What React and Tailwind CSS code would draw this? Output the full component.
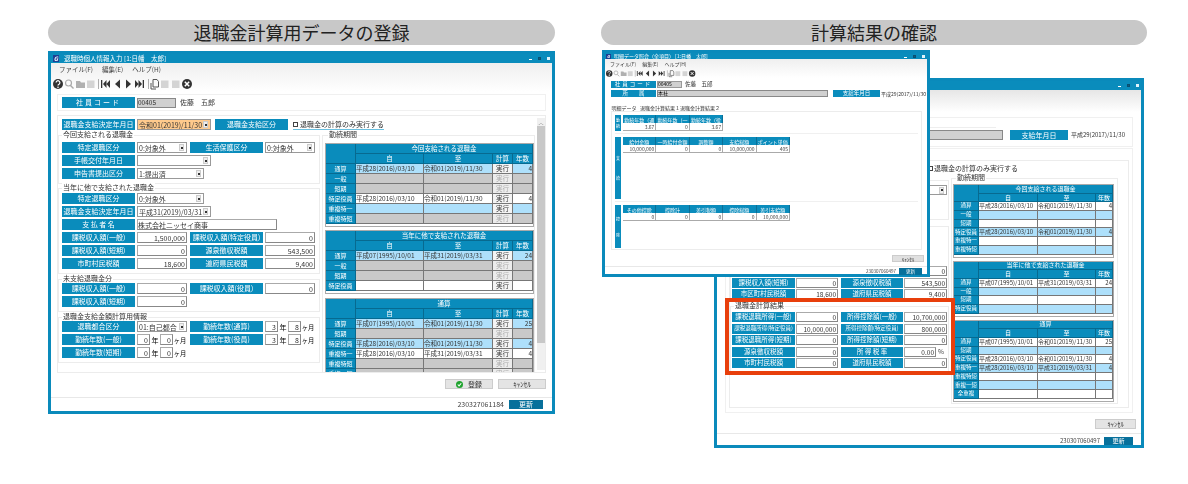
import React from 'react';

const blue = 'bg-[#0a8cbc]';

// generic bits used by all three windows
function Label({ children, className = '' }) {
    return <div className={`${blue} text-white text-center shrink-0 whitespace-nowrap overflow-hidden ${className}`}>{children}</div>;
}

function Field({ children, className = '' }) {
    return <div className={`bg-white border border-[#aaa] border-r-[#888] border-b-[#888] text-right pr-[1px] shrink-0 whitespace-nowrap overflow-hidden text-[#333] ${className}`}>{children}</div>;
}

function Select({ children, className = '' }) {
    return (
        <div className={`border border-[#999] flex items-center justify-between pl-[1px] pr-[2px] shrink-0 text-[#333] whitespace-nowrap ${className || 'bg-white'}`}>
            <span>{children}</span>
            <span className="w-[5px] h-[7px] bg-[#eee] border border-[#ccc] flex items-center justify-center">
                <span className="w-[2px] h-[2px] bg-[#333]" />
            </span>
        </div>
    );
}

function Group({ title, children, className = '' }) {
    return (
        <div className={`border border-[#ececec] ${className}`}>
            <div className="-mt-[6px] ml-[3px] w-fit bg-white px-[1px] h-[9px] leading-[9px] text-[7px] text-[#333]">{title}</div>
            {children}
        </div>
    );
}

function GLogo({ className = '' }) {
    return <span className={`bg-[#1c3f94] text-white font-bold italic flex items-center justify-center shrink-0 ${className}`}>G</span>;
}

function WinControls() {
    return (
        <div className="flex items-center gap-[6px] ml-auto mr-[2px]">
            <span className="w-[3px] h-[1px] mt-[2px] bg-white" />
            <span className="w-[3px] h-[3px] bg-[#0a5f86] border border-[#0b4f70]" />
            <span className="w-[3px] h-[3px] bg-[#dff3fb]" />
        </div>
    );
}

function ToolbarIcons({ width, height }) {
    return (
        <svg viewBox="0 0 150 14" width={width} height={height} className="shrink-0">
            <circle cx="10" cy="7" r="5" fill="#333" />
            <path d="M8.100 5.600a1.900 1.900 0 1 1 2.900 1.600c-.7.4-1 .8-1 1.400" stroke="#fff" strokeWidth="1.200" fill="none" />
            <circle cx="10" cy="10.200" r=".8" fill="#fff" />
            <circle cx="20.500" cy="6" r="3" stroke="#aaa" strokeWidth="1.200" fill="none" />
            <path d="M22.500 8.400l3 3" stroke="#aaa" strokeWidth="1.400" />
            <path d="M28 4h4l1 1.500h4V11h-9z" fill="#b0b0b0" />
            <rect x="39" y="3.500" width="7.500" height="7.500" fill="#d4d4d4" />
            <path d="M50.500 2v10" stroke="#999" strokeWidth=".8" />
            <path d="M53 3v8h1.300V3zM55 7l3.500-4v8zM58.500 7l3.500-4v8z" fill="#333" />
            <path d="M67 7l5-4.500v9z" fill="#333" />
            <path d="M83 7l-5-4.500v9z" fill="#333" />
            <path d="M87 3l3.500 4-3.500 4zM90.500 3l3.500 4-3.500 4zM94.700 3v8H96V3z" fill="#333" />
            <path d="M100.500 2v10" stroke="#999" strokeWidth=".8" />
            <path d="M105 2.500h4l1.500 2V10h-5.500zM103 6v6h5" stroke="#555" strokeWidth="1" fill="none" />
            <rect x="113" y="3.500" width="7.500" height="7.500" fill="#d4d4d4" />
            <rect x="124" y="3.500" width="7.500" height="7.500" fill="#d4d4d4" />
            <circle cx="139" cy="7" r="5" fill="#333" />
            <path d="M136.800 4.800l4.400 4.400M141.200 4.800l-4.400 4.400" stroke="#fff" strokeWidth="1.500" />
        </svg>
    );
}

// period tables ("勤続期間")
function PeriodTable({ title, rows, small, withCalc, className = '' }) {
    const grid = small
        ? 'grid-cols-[25px_59px_58px_17px] auto-rows-[8.700px] text-[6px]'
        : 'grid-cols-[30px_68px_69px_20px_20px] auto-rows-[10px] text-[6.500px]';
    const head = `${blue} text-white flex items-center justify-center border-r border-b border-[#076a90] whitespace-nowrap overflow-hidden`;
    const cellBg = { blue: 'bg-[#aee0fb]', gray: 'bg-[#c9c9c9]', white: 'bg-white' };
    const cell = 'border-r border-b border-[#777] flex items-center whitespace-nowrap overflow-hidden text-[#333] leading-none';
    return (
        <div className={`border border-[#aaa] pb-[2px] w-fit bg-white ${className}`}>
            <div className={`grid leading-none ${grid}`}>
                <div className={`${head} row-span-2`} />
                <div className={`${head} ${withCalc ? 'col-span-4' : 'col-span-3'}`}>{title}</div>
                <div className={head}>自</div>
                <div className={head}>至</div>
                {withCalc && <div className={head}>計算</div>}
                <div className={head}>年数</div>
                {rows.map((r) => (
                    <React.Fragment key={r.name}>
                        <div className={`${head} ${small ? 'text-[5.500px]' : 'text-[6px]'}`}>{r.name}</div>
                        <div className={`${cell} ${cellBg[r.color]}`}>{r.from}</div>
                        <div className={`${cell} ${cellBg[r.color]}`}>{r.to}</div>
                        {withCalc && (
                            <div className={`${cell} justify-center ${r.on ? 'bg-[#f4f4f4] text-[#222] border-[#555]' : 'bg-[#ececec] !text-[#aaa]'}`}>実行</div>
                        )}
                        <div className={`${cell} justify-end ${cellBg[r.color]}`}>{r.years}</div>
                    </React.Fragment>
                ))}
            </div>
        </div>
    );
}

function Row({ children, className = '' }) {
    return <div className={`flex items-stretch h-[11px] leading-[10px] ${className}`}>{children}</div>;
}

function Unit({ v1, v2 }) {
    return (
        <div className="flex items-center shrink-0 w-[52px] h-full">
            <Field className="w-[13px] h-full">{v1}</Field>
            <span className="w-[10px] text-center">年</span>
            <Field className="w-[13px] h-full">{v2}</Field>
            <span className="whitespace-nowrap scale-x-90">ヶ月</span>
        </div>
    );
}

const L = 'w-[73px]';
const L2 = 'w-[73px] ml-[3px]';

function InputWindow() {
    const rows1 = [
        { name: '通算', from: '平成28(2016)/03/10', to: '令和01(2019)/11/30', on: true, years: '4', color: 'blue' },
        { name: '一般', color: 'gray' },
        { name: '短期', color: 'gray' },
        { name: '特定役員', from: '平成28(2016)/03/10', to: '令和01(2019)/11/30', on: true, years: '4', color: 'white' },
        { name: '重複特一', on: true, color: 'blue' },
        { name: '重複特短', color: 'gray' },
    ];
    const rows2 = [
        { name: '通算', from: '平成07(1995)/10/01', to: '平成31(2019)/03/31', on: true, years: '24', color: 'blue' },
        { name: '一般', color: 'gray' },
        { name: '短期', color: 'gray' },
        { name: '特定役員', on: true, color: 'white' },
    ];
    const rows3 = [
        { name: '通算', from: '平成07(1995)/10/01', to: '令和01(2019)/11/30', on: true, years: '25', color: 'blue' },
        { name: '短期', color: 'gray' },
        { name: '特定役員', from: '平成28(2016)/03/10', to: '令和01(2019)/11/30', on: true, years: '4', color: 'blue' },
        { name: '重複特一', from: '平成28(2016)/03/10', to: '平成31(2019)/03/31', on: true, years: '4', color: 'white' },
        { name: '重複特短', color: 'gray' },
        { name: '重複一短', color: 'gray' },
    ];
    return (
        <div className="mt-[6px] w-[507px] h-[363px] border-[3px] border-[#0a8abb] bg-white flex flex-col text-[7px] blur-[0.3px]">
            <div className={`${blue} h-[9px] flex items-center text-white text-[6.500px] shrink-0`}>
                <GLogo className="w-[6px] h-[7px] text-[6px] ml-[2px] mr-[5px]" />
                <span>退職時個人情報入力 [1:日幡　太郎]</span>
                <WinControls />
            </div>
            <div className="bg-gradient-to-b from-[#efefef] to-white shrink-0">
                <div className="h-[13px] flex items-center gap-[9px] pl-[8px] text-[6.500px] text-[#444]">
                    <span>ファイル(F)</span><span>編集(E)</span><span>ヘルプ(H)</span>
                </div>
                <div className="h-[16px] flex items-center -ml-[3px]"><ToolbarIcons width={150} height={14} /></div>
            </div>

            <div className="mx-[6px] mt-[2px] h-[17px] border border-[#f0f0f0] flex items-center pl-[4px] shrink-0">
                <Label className={`${L} h-[11px] leading-[11px] tracking-[2px]`}>社員コード</Label>
                <div className="ml-[2px] w-[39px] h-[10px] bg-[#d0d0d0] border border-[#888] leading-[7px] text-[6.500px] text-[#333] overflow-hidden">00405</div>
                <span className="ml-[4px] text-[#333]">佐藤　五郎</span>
            </div>

            <div className="mx-[6px] mt-[4px] h-[258px] border border-[#ececec] flex overflow-hidden shrink-0">
                <div className="flex-1 min-w-0 overflow-hidden pt-[3px]">
                    <Row className="gap-[2px] pl-[4px]">
                        <Label className={L}>退職金支給決定年月日</Label>
                        <Select className="w-[74px] bg-[#ffca8c]">令和01(2019)/11/30</Select>
                        <Label className={`${L} ml-[2px]`}>退職金支給区分</Label>
                        <div className="ml-[3px] flex items-center gap-[2px] border-b border-[#6cc0e0] text-[#333]">
                            <span className="w-[5px] h-[5px] border border-[#444]" />
                            <span>退職金の計算のみ実行する</span>
                        </div>
                    </Row>
                    <div className="flex gap-[2px]">
                        <div className="w-[262px] shrink-0">
                            <Group title="今回支給される退職金" className="mt-[5px] pb-[4px]">
                                <div className="mt-[3px] flex flex-col gap-[2px] pl-[3px]">
                                    <Row>
                                        <Label className={L}>特定退職区分</Label>
                                        <Select className="ml-[2px] w-[50px]">0:対象外</Select>
                                        <Label className={L2}>生活保護区分</Label>
                                        <Select className="ml-[2px] w-[50px]">0:対象外</Select>
                                    </Row>
                                    <Row>
                                        <Label className={L}>手帳交付年月日</Label>
                                        <Select className="ml-[2px] w-[74px]" />
                                    </Row>
                                    <Row>
                                        <Label className={L}>申告書提出区分</Label>
                                        <Select className="ml-[2px] w-[67px]">1:提出済</Select>
                                    </Row>
                                </div>
                            </Group>
                            <Group title="当年に他で支給された退職金" className="mt-[4px] pb-[4px]">
                                <div className="mt-[1px] flex flex-col gap-[2px] pl-[3px]">
                                    <Row>
                                        <Label className={L}>特定退職区分</Label>
                                        <Select className="ml-[2px] w-[67px]">0:対象外</Select>
                                    </Row>
                                    <Row>
                                        <Label className={L}>退職金支給決定年月日</Label>
                                        <Select className="ml-[2px] w-[74px]">平成31(2019)/03/31</Select>
                                    </Row>
                                    <Row>
                                        <Label className={L}>支 払 者 名</Label>
                                        <Field className="ml-[2px] w-[140px] !text-left">株式会社ニッセイ商事</Field>
                                    </Row>
                                    <Row>
                                        <Label className={L}>課税収入額(一般)</Label>
                                        <Field className="ml-[2px] w-[50px]">1,500,000</Field>
                                        <Label className={L2}>課税収入額(特定役員)</Label>
                                        <Field className="ml-[2px] w-[50px]">0</Field>
                                    </Row>
                                    <Row>
                                        <Label className={L}>課税収入額(短期)</Label>
                                        <Field className="ml-[2px] w-[50px]">0</Field>
                                        <Label className={L2}>源泉徴収税額</Label>
                                        <Field className="ml-[2px] w-[50px]">543,500</Field>
                                    </Row>
                                    <Row>
                                        <Label className={L}>市町村民税額</Label>
                                        <Field className="ml-[2px] w-[50px]">18,600</Field>
                                        <Label className={L2}>道府県民税額</Label>
                                        <Field className="ml-[2px] w-[50px]">9,400</Field>
                                    </Row>
                                </div>
                            </Group>
                            <Group title="未支給退職金分" className="mt-[5px] pb-[4px]">
                                <div className="flex flex-col gap-[2px] pl-[3px]">
                                    <Row>
                                        <Label className={L}>課税収入額(一般)</Label>
                                        <Field className="ml-[2px] w-[50px]">0</Field>
                                        <Label className={L2}>課税収入額(役員)</Label>
                                        <Field className="ml-[2px] w-[50px]">0</Field>
                                    </Row>
                                    <Row>
                                        <Label className={L}>課税収入額(短期)</Label>
                                        <Field className="ml-[2px] w-[50px]">0</Field>
                                    </Row>
                                </div>
                            </Group>
                            <Group title="退職金支給金額計算用情報" className="mt-[5px] pb-[4px]">
                                <div className="flex flex-col gap-[2px] pl-[3px]">
                                    <Row>
                                        <Label className={L}>退職都合区分</Label>
                                        <Select className="ml-[2px] w-[50px]">01:自己都合</Select>
                                        <Label className={L2}>勤続年数(通算)</Label>
                                        <div className="ml-[2px]"><Unit v1="3" v2="8" /></div>
                                    </Row>
                                    <Row>
                                        <Label className={L}>勤続年数(一般)</Label>
                                        <div className="ml-[2px] w-[50px] shrink-0"><Unit v1="0" v2="0" /></div>
                                        <Label className={L2}>勤続年数(役員)</Label>
                                        <div className="ml-[2px]"><Unit v1="3" v2="8" /></div>
                                    </Row>
                                    <Row>
                                        <Label className={L}>勤続年数(短期)</Label>
                                        <div className="ml-[2px]"><Unit v1="0" v2="0" /></div>
                                    </Row>
                                </div>
                            </Group>
                        </div>
                        <Group title="勤続期間" className="mt-[5px] w-[213px] shrink-0 px-[2px]">
                            <div className="mt-[4px] flex flex-col gap-[3px]">
                                <PeriodTable title="今回支給される退職金" rows={rows1} withCalc />
                                <PeriodTable title="当年に他で支給された退職金" rows={rows2} withCalc />
                                <PeriodTable title="通算" rows={rows3} withCalc className="mt-[1px]" />
                            </div>
                        </Group>
                    </div>
                </div>
                <div className="w-[8px] shrink-0 mt-[2px] mb-[2px] bg-[#f0f0f0] flex flex-col">
                    <div className="h-[8px] text-center text-[5px] leading-[8px] text-[#555]">︿</div>
                    <div className="h-[217px] bg-[#c8c8c8]" />
                </div>
            </div>

            <div className="mt-[6px] mr-[6px] flex justify-end gap-[5px] text-[7px] shrink-0">
                <div className="w-[48px] h-[10px] bg-[#e4e4e4] border border-[#ccc] flex items-center justify-center gap-[5px] -ml-[1px]">
                    <svg viewBox="0 0 8 8" width="7" height="7">
                        <circle cx="4" cy="4" r="4" fill="#1fa32e" />
                        <path d="M2 4l1.500 1.600L6 2.600" stroke="#fff" strokeWidth="1.200" fill="none" />
                    </svg>
                    <span className="text-[#333]">登録</span>
                </div>
                <div className="w-[48px] h-[10px] bg-[#e4e4e4] border border-[#ccc] text-center leading-[8px] text-[7px] text-[#333]">ｷｬﾝｾﾙ</div>
            </div>
            <div className="mt-[8px] border-t border-[#e8e8e8] pt-[1px] pb-[2px] pr-[9px] flex items-center justify-end gap-[5px] shrink-0">
                <span className="text-[7px] text-[#444]">230327061184</span>
                <div className="w-[34px] h-[9px] bg-[#07709b] text-white text-center leading-[9px]">更新</div>
            </div>
        </div>
    );
}

function MiniGrid({ heads, values, cols }) {
    return (
        <div className={`grid ${cols} w-fit self-start text-[5px] leading-none`}>
            {heads.map((h) => (
                <div key={h} className={`${blue} text-white h-[8px] flex items-center justify-center border-r border-[#0a6f97] whitespace-nowrap overflow-hidden`}>{h}</div>
            ))}
            {values.map((v, i) => (
                <div key={i} className="h-[8px] bg-white border-r border-b border-[#aaa] flex items-center justify-end pr-[1px] text-[#444]">{v}</div>
            ))}
        </div>
    );
}

function DetailWindow() {
    return (
        <div className="w-[328px] h-[227px] border-[3px] border-[#0a8abb] bg-white flex flex-col text-[5.500px] blur-[0.3px]">
            <div className={`${blue} h-[6px] flex items-center text-white text-[5px] shrink-0`}>
                <GLogo className="w-[5px] h-[5px] text-[4px] ml-[1px] mr-[3px]" />
                <span>明細データ照会（全項目） [1:日幡　太郎]</span>
                <WinControls />
            </div>
            <div className="bg-gradient-to-b from-[#efefef] to-white shrink-0">
                <div className="h-[9px] flex items-center gap-[6px] pl-[5px] text-[5px] text-[#444]">
                    <span>ファイル(F)</span><span>編集(E)</span><span>ヘルプ(H)</span>
                </div>
                <div className="h-[10px] flex items-center -ml-[3px]"><ToolbarIcons width={98} height={9} /></div>
            </div>

            <div className="mt-[3px] pl-[6px] flex flex-col gap-[2px] shrink-0">
                <div className="flex items-center h-[7px]">
                    <Label className="w-[45px] h-full leading-[7px] tracking-[2px]">社員コード</Label>
                    <div className="ml-[1px] w-[25px] h-full bg-[#d0d0d0] border border-[#999] leading-[4px] text-[5px]">00405</div>
                    <span className="ml-[3px] text-[#333]">佐藤　五郎</span>
                </div>
                <div className="flex items-center h-[7px]">
                    <Label className="w-[45px] h-full leading-[7px]">所　　属</Label>
                    <div className="ml-[1px] w-[171px] h-full bg-[#d0d0d0] border border-[#888] leading-[4px] text-[5px]">本社</div>
                    <Label className="ml-[5px] w-[47px] h-full leading-[7px]">支給年月日</Label>
                    <span className="ml-[1px] text-[#333] text-[5px]">平成29(2017)/11/30</span>
                </div>
            </div>

            <div className="mt-[7px] ml-[6px] flex items-end gap-[3px] h-[7px] text-[#333] text-[5px] whitespace-nowrap shrink-0">
                <span className="w-[26px] text-center">明細データ</span>
                <span className="w-[37px] text-center">退職金計算結果１</span>
                <span className="w-[39px] text-center">退職金計算結果２</span>
            </div>
            <div className="ml-[6px] w-[311px] h-[139px] border border-[#ececec] flex flex-col px-[3px] shrink-0">
                <div className="mt-[3px] pb-[2px] flex gap-[2px] border-b border-[#f0f0f0]">
                    <div className={`${blue} w-[6px] h-[16px] text-white text-[4px] flex flex-col items-center justify-center`}><span>勤</span><span>続</span></div>
                    <MiniGrid cols="grid-cols-[repeat(3,33.400px)]" heads={['勤続年数（通', '勤続年数（一', '勤続年数（役']} values={['3.67', '0', '3.67']} />
                </div>
                <div className="mt-[3px] pb-[2px] flex gap-[2px] border-b border-[#f0f0f0]">
                    <div className={`${blue} w-[6px] h-[62px] text-white text-[4px] flex flex-col items-center justify-center gap-[14px]`}><span>支</span><span>給</span></div>
                    <MiniGrid cols="grid-cols-[repeat(5,33.400px)]" heads={['給付金額', '一時給付金額', '調整額', '支給総額', 'ポイント単価']} values={['10,000,000', '0', '0', '10,000,000', '405']} />
                </div>
                <div className="mt-[3px] flex gap-[2px]">
                    <div className={`${blue} w-[6px] h-[43px] text-white text-[4px] flex flex-col items-center justify-center gap-[10px]`}><span>控</span><span>除</span></div>
                    <MiniGrid cols="grid-cols-[repeat(5,33.400px)]" heads={['その他控除', '控除計', '差引税額', '控除総額', '差引支給額']} values={['0', '0', '0', '0', '10,000,000']} />
                </div>
            </div>

            <div className="mt-[5px] mr-[3px] self-end w-[32px] h-[7px] bg-[#e0e0e0] border border-[#ccc] text-center leading-[5px] text-[5px] text-[#333] shrink-0">ｷｬﾝｾﾙ</div>
            <div className="mt-[4px] border-t border-[#e8e8e8] pt-[1px] pr-[5px] flex items-center justify-end gap-[3px] shrink-0">
                <span className="text-[4.500px] text-[#444]">230307060497</span>
                <div className="w-[23px] h-[7px] bg-[#07709b] text-white text-center leading-[7px] text-[4.500px]">更新</div>
            </div>
        </div>
    );
}

const BL = 'w-[63px]';
const BL2 = 'w-[62px] ml-[3px]';

function BackRow({ children }) {
    return <div className="flex items-stretch h-[10px] leading-[9px] text-[6.500px]">{children}</div>;
}

function ResultWindow() {
    const rows1 = [
        { name: '通算', from: '平成28(2016)/03/10', to: '令和01(2019)/11/30', years: '4', color: 'white' },
        { name: '一般', color: 'blue' },
        { name: '短期', color: 'white' },
        { name: '特定役員', from: '平成28(2016)/03/10', to: '令和01(2019)/11/30', years: '4', color: 'blue' },
        { name: '重複特一', color: 'white' },
        { name: '重複特短', color: 'blue' },
    ];
    const rows2 = [
        { name: '通算', from: '平成07(1995)/10/01', to: '平成31(2019)/03/31', years: '24', color: 'white' },
        { name: '一般', color: 'blue' },
        { name: '短期', color: 'white' },
        { name: '特定役員', color: 'blue' },
    ];
    const rows3 = [
        { name: '通算', from: '平成07(1995)/10/01', to: '令和01(2019)/11/30', years: '25', color: 'white' },
        { name: '短期', color: 'blue' },
        { name: '特定役員', from: '平成28(2016)/03/10', to: '令和01(2019)/11/30', years: '4', color: 'white' },
        { name: '重複特一', from: '平成28(2016)/03/10', to: '平成31(2019)/03/31', years: '4', color: 'blue' },
        { name: '重複特短', color: 'white' },
        { name: '重複一短', color: 'blue' },
        { name: '全重複', color: 'white' },
    ];
    return (
        <div className="w-[430px] h-[370px] border-[3px] border-[#0a8abb] bg-white flex flex-col text-[7px] blur-[0.3px]">
            <div className={`${blue} h-[9px] flex items-center text-white shrink-0`}>
                <WinControls />
            </div>
            <div className="h-[22px] bg-gradient-to-b from-[#e6e6e6] to-white shrink-0" />

            <div className="mt-[5px] mx-[8px] h-[30px] border border-[#f0f0f0] flex flex-col items-end shrink-0">
                <div className="mt-[9px] mr-[136px] w-[70px] h-[1px] bg-[#eee]" />
                <div className="mt-[2px] flex items-stretch h-[10px] leading-[10px]">
                    <div className="w-[150px] bg-[#d0d0d0] border border-[#888]" />
                    <Label className="ml-[7px] w-[58px]">支給年月日</Label>
                    <span className="ml-[3px] mr-[7px] text-[6px] text-[#333]">平成29(2017)/11/30</span>
                </div>
            </div>

            <div className="mt-[1px] mx-[8px] h-[265px] border border-[#f0f0f0] px-[3px] pt-[11px] shrink-0">
                <div className="h-[248px] border border-[#ececec]">
                    <div className="mt-[2px] h-[10px] flex items-center pl-[198px] gap-[1px] text-[#333]">
                        <span className="w-[5px] h-[5px] border border-[#444]" />
                        <span>退職金の計算のみ実行する</span>
                    </div>
                    <div className="mt-[5px] flex gap-[2px]">
                        <div className="w-[219px] shrink-0">
                            <div className="mt-[2px] h-[40px] border border-[#ececec] pt-[4px] pl-[1px]">
                                <BackRow>
                                    <Label className={BL}>特定退職区分</Label>
                                    <Field className="ml-[1px] w-[42px]" />
                                    <Label className={BL2}>生活保護区分</Label>
                                    <Select className="ml-[1px] w-[43px]" />
                                </BackRow>
                            </div>
                            <div className="mt-[6px] h-[74px] border border-[#ececec] pt-[39px] pl-[1px] flex flex-col gap-[1.500px]">
                                <BackRow>
                                    <Label className={BL}>課税収入額(一般)</Label>
                                    <Field className="ml-[1px] w-[42px]">1,500,000</Field>
                                    <Label className={BL2}>課税収入額(特定役員)</Label>
                                    <Field className="ml-[1px] w-[43px]">0</Field>
                                </BackRow>
                                <BackRow>
                                    <Label className={BL}>課税収入額(短期)</Label>
                                    <Field className="ml-[1px] w-[42px]">0</Field>
                                    <Label className={BL2}>源泉徴収税額</Label>
                                    <Field className="ml-[1px] w-[43px]">543,500</Field>
                                </BackRow>
                                <BackRow>
                                    <Label className={BL}>市区町村民税額</Label>
                                    <Field className="ml-[1px] w-[42px]">18,600</Field>
                                    <Label className={BL2}>道府県民税額</Label>
                                    <Field className="ml-[1px] w-[43px]">9,400</Field>
                                </BackRow>
                            </div>
                            <Group title="退職金計算結果" className="mt-[6px] pb-[3px]">
                                <div className="mt-[2px] pl-[1px] flex flex-col gap-[1.500px]">
                                    <BackRow>
                                        <Label className={BL}>課税退職所得(一般)</Label>
                                        <Field className="ml-[1px] w-[42px]">0</Field>
                                        <Label className={BL2}>所得控除額(一般)</Label>
                                        <Field className="ml-[1px] w-[43px]">10,700,000</Field>
                                    </BackRow>
                                    <BackRow>
                                        <Label className={`${BL} text-[5.500px]`}>課税退職所得(特定役員)</Label>
                                        <Field className="ml-[1px] w-[42px]">10,000,000</Field>
                                        <Label className={`${BL2} text-[5.500px]`}>所得控除額(特定役員)</Label>
                                        <Field className="ml-[1px] w-[43px]">800,000</Field>
                                    </BackRow>
                                    <BackRow>
                                        <Label className={BL}>課税退職所得(短期)</Label>
                                        <Field className="ml-[1px] w-[42px]">0</Field>
                                        <Label className={BL2}>所得控除額(短期)</Label>
                                        <Field className="ml-[1px] w-[43px]">0</Field>
                                    </BackRow>
                                    <BackRow>
                                        <Label className={BL}>源泉徴収税額</Label>
                                        <Field className="ml-[1px] w-[42px]">0</Field>
                                        <Label className={BL2}>所 得 税 率</Label>
                                        <Field className="ml-[1px] w-[32px]">0.00</Field>
                                        <span className="ml-[2px] text-[#444]">%</span>
                                    </BackRow>
                                    <BackRow>
                                        <Label className={BL}>市町村民税額</Label>
                                        <Field className="ml-[1px] w-[42px]">0</Field>
                                        <Label className={BL2}>道府県民税額</Label>
                                        <Field className="ml-[1px] w-[43px]">0</Field>
                                    </BackRow>
                                </div>
                            </Group>
                        </div>
                        <Group title="勤続期間" className="w-[167px] shrink-0 pl-[1px] pb-[1px]">
                            <div className="mt-[2px] flex flex-col gap-[3px]">
                                <PeriodTable small title="今回支給される退職金" rows={rows1} />
                                <PeriodTable small title="当年に他で支給された退職金" rows={rows2} />
                                <PeriodTable small title="通算" rows={rows3} />
                            </div>
                        </Group>
                    </div>
                </div>
            </div>

            <div className="mt-[6px] mr-[5px] self-end w-[41px] h-[10px] bg-[#e4e4e4] border border-[#ccc] text-center leading-[8px] text-[6.500px] text-[#333] shrink-0">ｷｬﾝｾﾙ</div>
            <div className="mt-[4px] border-t border-[#e8e8e8] pt-[2px] pr-[8px] flex items-center justify-end gap-[4px] shrink-0">
                <span className="text-[6px] text-[#444]">230307060497</span>
                <div className="w-[29px] h-[8px] bg-[#07709b] text-white text-center leading-[8px] text-[6px]">更新</div>
            </div>
        </div>
    );
}

export default function App() {
    return (
        <div className="w-[1188px] h-[484px] bg-white overflow-hidden flex pt-[20px] pl-[48px] gap-[46px] font-['Noto_Sans_CJK_JP','Noto_Sans',sans-serif]">
            <div className="w-[507px] shrink-0">
                <div className="h-[25px] rounded-full bg-[#c8c8c8] text-center text-[18px] leading-[25px] text-[#222]">退職金計算用データの登録</div>
                <InputWindow />
            </div>
            <div className="w-[546px] shrink-0">
                <div className="h-[25px] rounded-full bg-[#c8c8c8] text-center text-[18px] leading-[25px] text-[#222]">計算結果の確認</div>
                {/* overlapping windows on the desktop */}
                <div className="relative mt-[5px] h-[398px]">
                    <div className="absolute left-[113px] top-[28px]"><ResultWindow /></div>
                    <div className="absolute left-[1px] top-0"><DetailWindow /></div>
                    <div className="absolute left-[124px] top-[248px] w-[230px] h-[77px] border-[4px] border-[#e83f0c]" />
                </div>
            </div>
        </div>
    );
}
